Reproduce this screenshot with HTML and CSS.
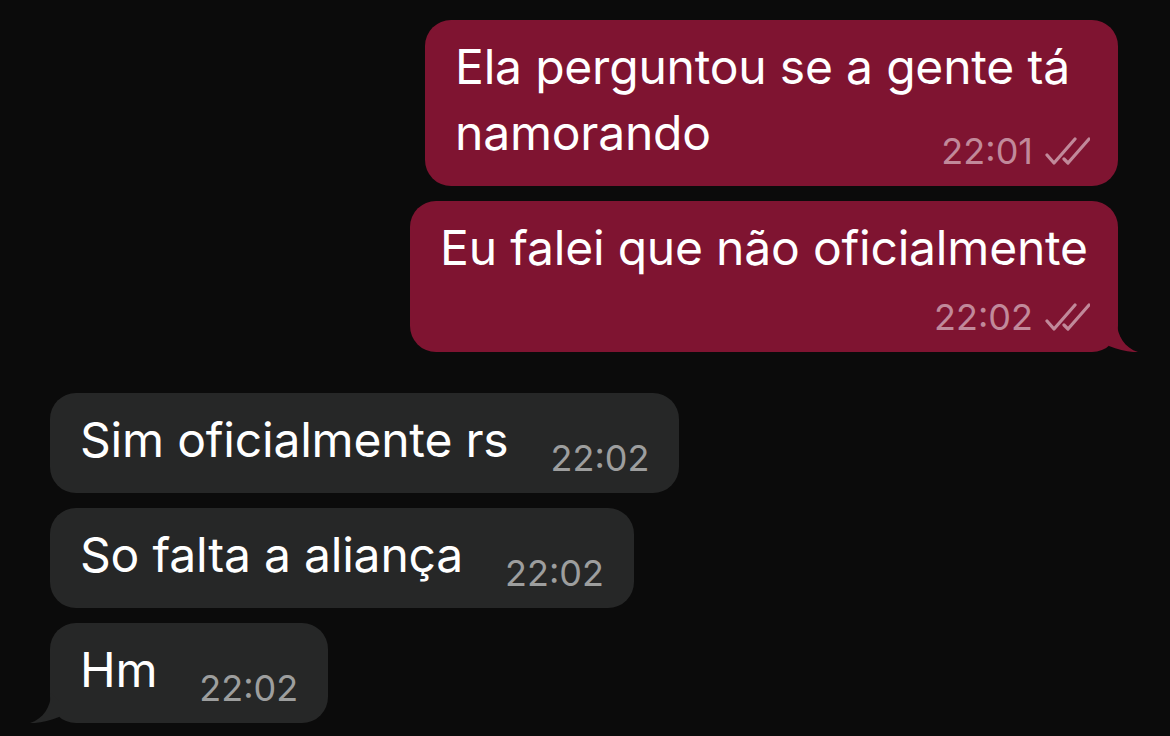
FILE: index.html
```html
<!DOCTYPE html>
<html lang="pt-BR">
<head>
<meta charset="utf-8">
<title>Chat</title>
<link rel="stylesheet" href="styles.css">
</head>
<body>
<div class="thread">
  <div class="bubble out narrow">
    <span class="text">Ela perguntou se a gente tá namorando</span><span class="meta"><span class="time">22:01</span><svg class="ticks" viewBox="0 0 46 28" width="46" height="28"><path d="M3 18 L10 26 L31 2 M20 22 L24 26 L45 2"/></svg></span>
  </div>
  <div class="bubble out tail">
    <span class="text">Eu falei que não oficialmente</span><span class="meta own-line"><span class="time">22:02</span><svg class="ticks" viewBox="0 0 46 28" width="46" height="28"><path d="M3 18 L10 26 L31 2 M20 22 L24 26 L45 2"/></svg></span>
    <svg class="tail-shape" viewBox="0 0 32 30" width="32" height="30"><path d="M10 0 C10 14 18 26 31 30 C22 30.5 12 28 2 24 L2 8 Z"/></svg>
  </div>
  <div class="bubble in first-in">
    <span class="text">Sim oficialmente rs</span><span class="meta"><span class="time">22:02</span></span>
  </div>
  <div class="bubble in">
    <span class="text">So falta a aliança</span><span class="meta"><span class="time">22:02</span></span>
  </div>
  <div class="bubble in tail">
    <span class="text">Hm</span><span class="meta"><span class="time">22:02</span></span>
    <svg class="tail-shape" viewBox="0 0 32 30" width="32" height="30"><path d="M10 0 C10 14 18 26 31 30 C22 30.5 12 28 2 24 L2 8 Z"/></svg>
  </div>
</div>
</body>
</html>
```

FILE: styles.css
```css
html, body {
  margin: 0;
  padding: 0;
  background: #0b0b0b;
}

body {
  width: 1170px;
  height: 736px;
  overflow: hidden;
  font-family: Inter, "Noto Sans", "Liberation Sans", sans-serif;
}

.thread {
  display: flex;
  flex-direction: column;
  gap: 15px;
  padding: 20px 52px 0 50px;
}

.bubble {
  position: relative;
  display: flow-root;
  box-sizing: border-box;
  max-width: 708px;
  padding: 14px 28px 17px 30px;
  border-radius: 26px;
  color: #ffffff;
  font-size: 48px;
  line-height: 66px;
}

.text {
  letter-spacing: -0.2px;
}

.bubble.out {
  align-self: flex-end;
  background: #7f1431;
}

.bubble.in {
  align-self: flex-start;
  background: #262727;
  padding-right: 30px;
}

.bubble.narrow {
  max-width: 693px;
}

.first-in {
  margin-top: 26px;
}

.meta {
  float: right;
  margin-left: 42px;
  margin-top: 33px;
  font-size: 36px;
  line-height: 36px;
  white-space: nowrap;
}

.meta.own-line {
  margin-top: 18px;
}

.bubble.out .meta {
  color: #c1899a;
}

.bubble.in .meta {
  color: #9d9e9e;
}

.ticks {
  margin-left: 11px;
  vertical-align: -1px;
}

.ticks path {
  fill: none;
  stroke: #c1899a;
  stroke-width: 3.2;
  stroke-linecap: round;
  stroke-linejoin: round;
}

.tail-shape {
  position: absolute;
  bottom: 0;
}

.bubble.out .tail-shape {
  right: -21px;
  fill: #7f1431;
}

.bubble.in .tail-shape {
  left: -21px;
  fill: #262727;
  transform: scaleX(-1);
}
```
